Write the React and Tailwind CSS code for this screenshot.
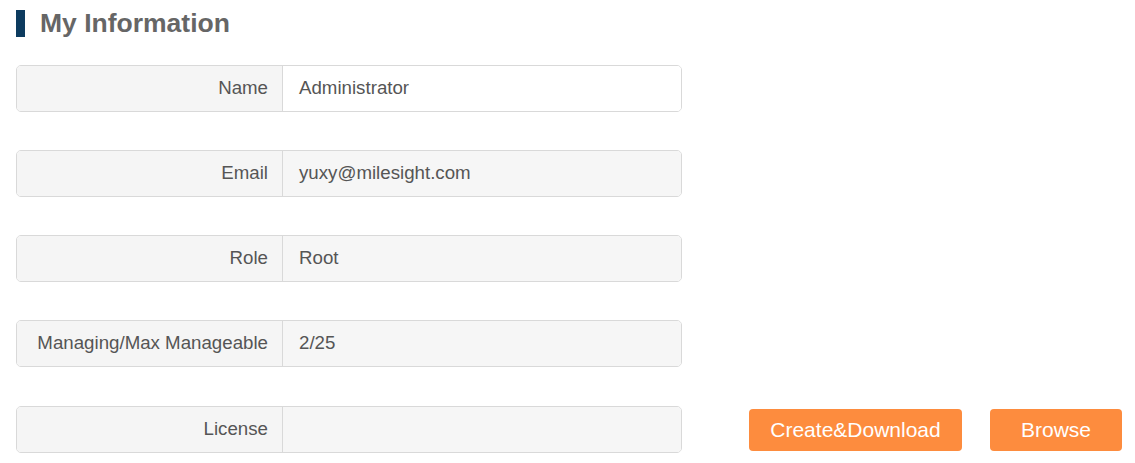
const fields = [
  { label: 'Name', value: 'Administrator', editable: true },
  { label: 'Email', value: 'yuxy@milesight.com' },
  { label: 'Role', value: 'Root' },
  { label: 'Managing/Max Manageable', value: '2/25' },
  { label: 'License', value: '' }
];

function FieldRow({ label, value, editable }) {
  return (
    <div className="flex h-[47px] w-[666px] overflow-hidden rounded-[5px] border border-[#d9d9d9]">
      <div className="flex w-[266px] flex-none items-center justify-end border-r border-[#d9d9d9] bg-[#f5f5f5] pr-[14px] text-[#555]">
        {label}
      </div>
      <div
        className={`flex flex-1 items-center pl-[16px] text-[#555] ${editable ? 'bg-white' : 'bg-[#f6f6f6]'}`}
      >
        {value}
      </div>
    </div>
  );
}

export default function App() {
  return (
    <div
      className="h-[463px] w-[1135px] bg-white text-[18.7px]"
      style={{ fontFamily: '"Liberation Sans", Arial, sans-serif' }}
    >
      <div className="flex items-center pl-[16px] pt-[10px]">
        <div className="h-[27px] w-[9px] bg-[#0d3b5f]" />
        <h1 className="ml-[15px] text-[26.5px] font-bold leading-[27px] text-[#666]">My Information</h1>
      </div>

      <div className="mt-[28px] flex flex-col gap-[38px] pl-[16px]">
        {fields.map((f) => (
          <div key={f.label} className={`flex items-center ${f.label === 'License' ? 'mt-px' : ''}`}>
            <FieldRow {...f} />
            {f.label === 'License' && (
              <div className="ml-[67px] flex gap-[28px]">
                <button
                  type="button"
                  className="h-[42px] w-[213px] rounded-[4px] bg-[#fd8c3e] text-[21px] text-white"
                >
                  Create&amp;Download
                </button>
                <button
                  type="button"
                  className="h-[42px] w-[132px] rounded-[4px] bg-[#fd8c3e] text-[21px] text-white"
                >
                  Browse
                </button>
              </div>
            )}
          </div>
        ))}
      </div>
    </div>
  );
}
